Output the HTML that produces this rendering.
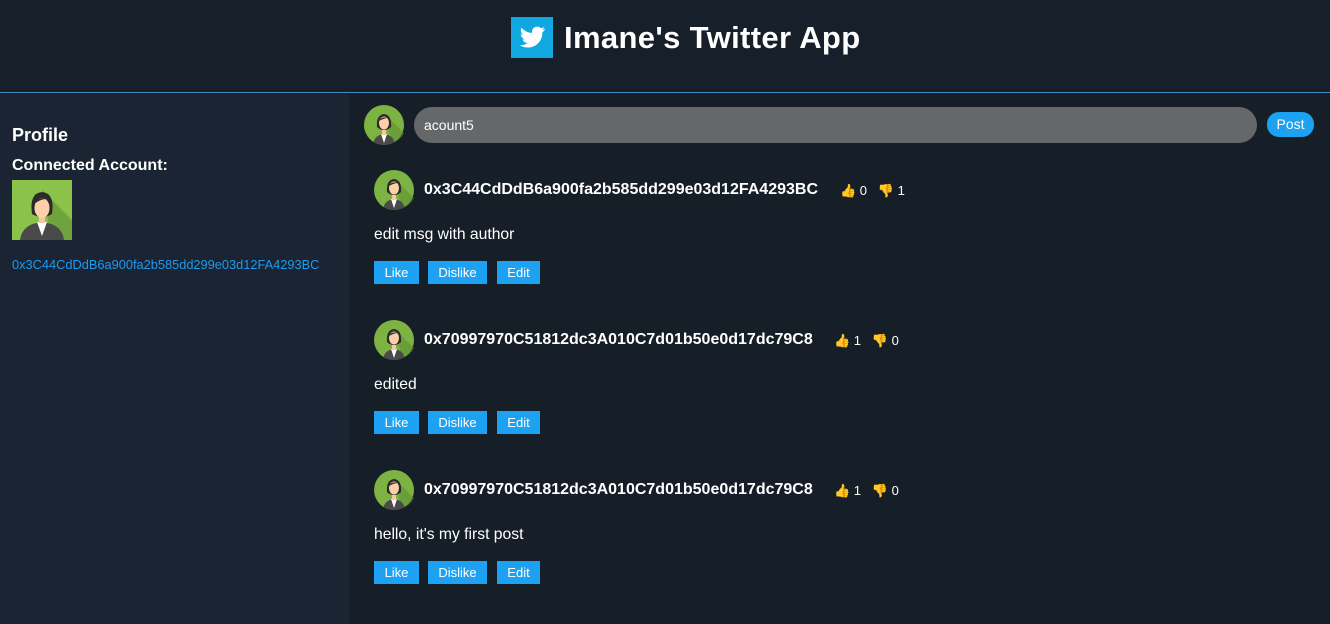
<!DOCTYPE html>
<html><head><meta charset="utf-8"><style>
*{margin:0;padding:0;box-sizing:border-box}
body{width:1330px;height:624px;overflow:hidden;background:#171e29;font-family:"Liberation Sans",Arial,sans-serif;color:#fff;position:relative}
.hdr{position:absolute;left:0;top:0;width:1330px;height:93px;background:#171f2a;border-bottom:1px solid #3d8fc4}
.title{position:absolute;left:511px;top:17px;display:flex;align-items:center}
.title span{font-size:31px;font-weight:bold;margin-left:11px;letter-spacing:0.35px}
.side{position:absolute;left:0;top:94px;width:349px;height:530px;background:#1a2432}
.main{position:absolute;left:349px;top:94px;width:981px;height:530px;background:#161e28}
.abs{position:absolute}
.btn{position:absolute;height:23px;background:#1da1f2;color:#fff;font-size:13px;line-height:23px;text-align:center}
.addr{position:absolute;font-size:16px;font-weight:bold}
.cnt{position:absolute;font-size:13px}
</style></head><body>
<svg width="0" height="0" style="position:absolute"><defs>
<g id="av">
<circle cx="20" cy="20" r="20" fill="#7cb342"/>
<path d="M20 8 L40 28 A20 20 0 0 1 28 38 Z" fill="#5d8f34" opacity=".6"/>
<clipPath id="cc"><circle cx="20" cy="20" r="20"/></clipPath>
<g clip-path="url(#cc)">
<path d="M9 40 Q10 30 20 29 Q30 30 31 40Z" fill="#4a4a4a"/>
<path d="M17 29 L20 38 L23 29Z" fill="#fff"/>
<rect x="18" y="24" width="4" height="6" fill="#f6c9a0"/>
<path d="M13 22 Q12 10 20 9 Q28 10 27 22 Q24 25 20 25 Q16 25 13 22Z" fill="#2b2b2b"/>
<ellipse cx="20" cy="18" rx="5" ry="6.5" fill="#fcd0a8"/>
<path d="M15 16 Q17 11 24 13 Q20 13 15 16Z" fill="#2b2b2b"/>
</g></g></defs></svg>
<div class="hdr"><div class="title">
<svg width="42" height="41" viewBox="0 0 42 41"><rect width="42" height="41" fill="#11a7e0"/><path d="M34 12c-1 .5-2 .7-3 .8 1-.7 2-1.6 2.3-2.8-1 .6-2 1-3.3 1.3a5.2 5.2 0 0 0-8.9 4.7C16.800 15.800 13 13.800 10.500 10.800c-1.400 2.400-.6 5.400 1.600 6.900-.8 0-1.600-.3-2.300-.6 0 2.500 1.800 4.700 4.200 5.200-.8.2-1.600.2-2.400.1.700 2.100 2.600 3.600 4.900 3.600-2.200 1.700-5 2.500-7.700 2.200 2.300 1.500 5.100 2.300 7.900 2.300 9.600 0 15-8.100 14.700-15.300 1.100-.7 2-1.700 2.700-2.800z" fill="#fff"/></svg>
<span>Imane's Twitter App</span></div></div>
<div class="side">
<div class="abs" style="left:12px;top:31px;font-size:18px;font-weight:bold">Profile</div>
<div class="abs" style="left:12px;top:63px;font-size:16px;font-weight:bold">Connected Account:</div>
<svg class="abs" style="left:12px;top:86px" width="60" height="60" viewBox="0 0 60 60"><rect width="60" height="60" fill="#8bc34a"/><path d="M30 10 L60 40 L60 60 L40 60Z" fill="#5d8f34" opacity=".6"/><path d="M8 60 Q10 44 30 42 Q50 44 52 60Z" fill="#4a4a4a"/><path d="M25 42 L30 56 L35 42Z" fill="#fff"/><rect x="27" y="34" width="6" height="9" fill="#f6c9a0"/><path d="M20 34 Q17 13 30 12 Q43 13 40 34 Q35 37 30 37 Q25 37 20 34Z" fill="#2b2b2b"/><ellipse cx="30" cy="28" rx="7.5" ry="10" fill="#fcd0a8"/><path d="M22 24 Q25 16 37 19 Q30 18 22 24Z" fill="#2b2b2b"/></svg>
<div class="abs" style="left:12px;top:163px;font-size:12.8px;color:#1d9bf0">0x3C44CdDdB6a900fa2b585dd299e03d12FA4293BC</div>
</div>
<div class="main"></div>
<svg class="abs" style="left:364px;top:105px" width="40" height="40" viewBox="0 0 40 40"><use href="#av"/></svg>
<div class="abs" style="left:414px;top:107px;width:843px;height:36px;border-radius:18px;background:#666769;font-size:14px;line-height:36px;padding-left:10px">acount5</div>
<div class="btn" style="left:1267px;top:112px;width:47px;border-radius:12px;height:25px;line-height:25px;font-size:14px">Post</div>

<svg class="abs" style="left:374px;top:170px" width="40" height="40" viewBox="0 0 40 40"><use href="#av"/></svg>
<div class="addr" style="left:424px;top:181px">0x3C44CdDdB6a900fa2b585dd299e03d12FA4293BC</div>
<div class="cnt" style="left:840px;top:183px"><span style="color:#f4b400">👍</span> 0 &nbsp;&nbsp;<span style="color:#f4b400">👎</span> 1</div>
<div class="abs" style="left:374px;top:226px;font-size:15.7px">edit msg with author</div>
<div class="btn" style="left:374px;top:261px;width:45px">Like</div>
<div class="btn" style="left:428px;top:261px;width:59px">Dislike</div>
<div class="btn" style="left:497px;top:261px;width:43px">Edit</div>

<svg class="abs" style="left:374px;top:320px" width="40" height="40" viewBox="0 0 40 40"><use href="#av"/></svg>
<div class="addr" style="left:424px;top:331px">0x70997970C51812dc3A010C7d01b50e0d17dc79C8</div>
<div class="cnt" style="left:834px;top:333px"><span style="color:#f4b400">👍</span> 1 &nbsp;&nbsp;<span style="color:#f4b400">👎</span> 0</div>
<div class="abs" style="left:374px;top:376px;font-size:15.7px">edited</div>
<div class="btn" style="left:374px;top:411px;width:45px">Like</div>
<div class="btn" style="left:428px;top:411px;width:59px">Dislike</div>
<div class="btn" style="left:497px;top:411px;width:43px">Edit</div>

<svg class="abs" style="left:374px;top:470px" width="40" height="40" viewBox="0 0 40 40"><use href="#av"/></svg>
<div class="addr" style="left:424px;top:481px">0x70997970C51812dc3A010C7d01b50e0d17dc79C8</div>
<div class="cnt" style="left:834px;top:483px"><span style="color:#f4b400">👍</span> 1 &nbsp;&nbsp;<span style="color:#f4b400">👎</span> 0</div>
<div class="abs" style="left:374px;top:526px;font-size:15.7px">hello, it's my first post</div>
<div class="btn" style="left:374px;top:561px;width:45px">Like</div>
<div class="btn" style="left:428px;top:561px;width:59px">Dislike</div>
<div class="btn" style="left:497px;top:561px;width:43px">Edit</div>
</body></html>
